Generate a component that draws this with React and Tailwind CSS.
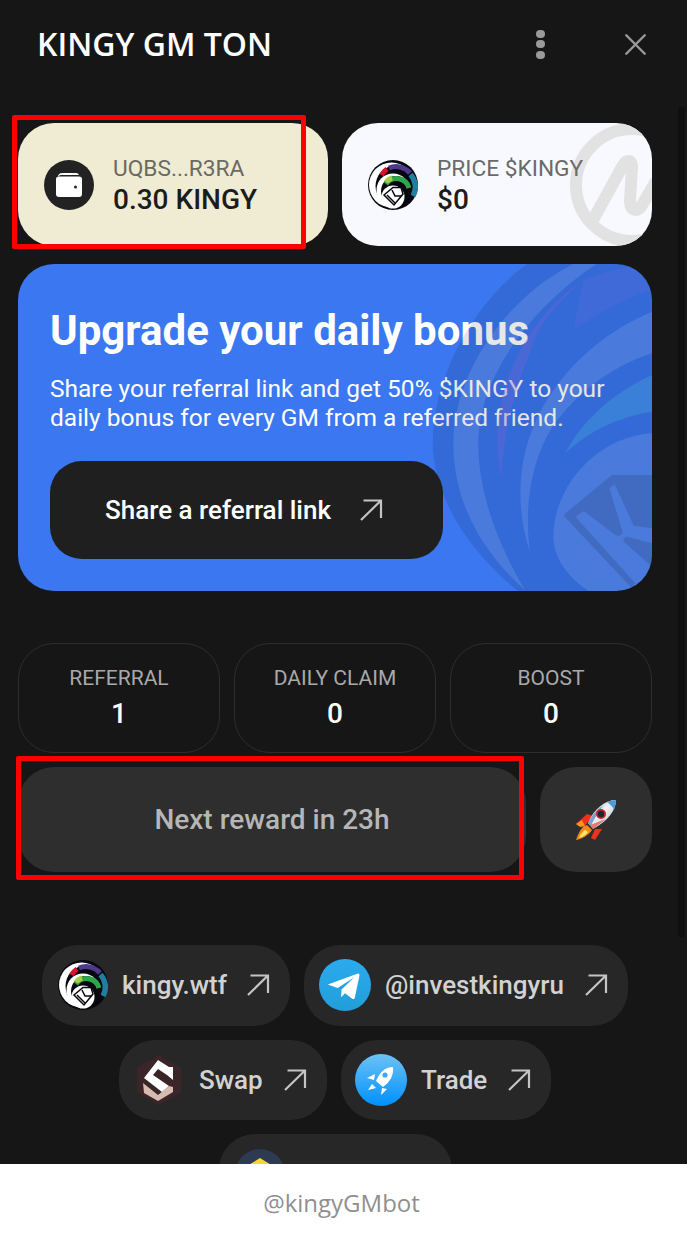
import React from 'react';
import { X } from 'lucide-react';

const roboto = 'font-["Roboto",sans-serif]';

const Arrow = () => (
  <svg width="24" height="24" viewBox="0 0 24 24" fill="none" stroke="#c4c4c4" strokeWidth="2.2" className="shrink-0">
    <path d="M2 22 L22 2.5 M4.5 2.5 H22 V20" />
  </svg>
);

const KingyLogo = () => (
  <svg width="50" height="50" viewBox="0 0 50 50" className="shrink-0">
    <circle cx="25" cy="25" r="25" fill="#07070f" />
    <circle cx="23.5" cy="25" r="22.5" fill="#fff" />
    <circle cx="28" cy="26" r="20.5" fill="#07070f" />
    <path d="M21 8 A18.5 18.5 0 0 1 42 13" fill="none" stroke="#4d3a8c" strokeWidth="5" />
    <path d="M13.5 15 A18.5 18.5 0 0 1 19 9" fill="none" stroke="#d8112c" strokeWidth="5" />
    <path d="M42.5 14.5 A18.5 18.5 0 0 1 45 36" fill="none" stroke="#1f7f9e" strokeWidth="5.5" />
    <circle cx="25" cy="30" r="16.5" fill="#fff" />
    <circle cx="28" cy="31" r="15" fill="#07070f" />
    <path d="M18 24 A13 13 0 0 1 41 28" fill="none" stroke="#2ba84a" strokeWidth="5" />
    <path d="M18 22 A13 13 0 0 1 24 18" fill="none" stroke="#a6cf45" strokeWidth="5" />
    <circle cx="25" cy="37" r="11.5" fill="#fff" />
    <path d="M16 35 L25 27.5 H33 L35 34 L26 45 Z" fill="#fff" stroke="#07070f" strokeWidth="1.5" />
    <path d="M19 35 L27 43 M24 30 L27 36 L33 36" fill="none" stroke="#07070f" strokeWidth="1.5" />
  </svg>
);

const TelegramLogo = () => (
  <svg width="52" height="52" viewBox="0 0 53 53" className="shrink-0">
    <defs>
      <linearGradient id="tg" x1="0" y1="0" x2="0" y2="1">
        <stop offset="0" stopColor="#2aabee" />
        <stop offset="1" stopColor="#229ed9" />
      </linearGradient>
    </defs>
    <circle cx="26.5" cy="26.5" r="26.5" fill="url(#tg)" />
    <path d="M9 26 L39 15 C40.5 14.5 41.6 15.3 41.2 17 L36.5 39.5 C36.1 41 35 41.3 33.8 40.5 L26.5 35 L22.5 39 L23 31 L36 18.5 L19 29.5Z" fill="#fff" />
  </svg>
);

const SwapLogo = () => (
  <svg width="46" height="50" viewBox="0 0 46 50" className="shrink-0">
    <path d="M23 0 L45 12.5 V37.5 L23 50 L1 37.5 V12.5Z" fill="#3a2529" />
    <path d="M22 5 L33 12 L37 12 V25 L31 20 L22 14 L17 20 L33 31 L26 37 L8 23Z" fill="#fff" />
    <path d="M7 28 L22 40 L33 31 L37 32 V37 L22 46 L8 38Z" fill="#d6bcae" />
  </svg>
);

const TradeLogo = () => (
  <svg width="52" height="52" viewBox="0 0 52 52" className="shrink-0">
    <defs>
      <linearGradient id="trade" x1="0" y1="0" x2="0" y2="1">
        <stop offset="0" stopColor="#6cc2f5" />
        <stop offset="1" stopColor="#0090ff" />
      </linearGradient>
    </defs>
    <circle cx="26" cy="26" r="26" fill="url(#trade)" />
    <path d="M38 13 C39 21 35 28 28 33 L21 27 C25 18 30 13 38 13Z" fill="#fff" />
    <circle cx="30" cy="21" r="2.6" fill="#3ba8f8" />
    <path d="M20 20 L12 24 L19 26 Z M27 34 L26 41 L32 35 Z M17 30 L13 36 L21 34Z" fill="#fff" />
  </svg>
);

const WalletIcon = () => (
  <svg width="28" height="26" viewBox="0 0 28 26">
    <path d="M3 5 C3 2 5 1 7 1 H21 C23 1 23.5 2 24 3 H6 C4.5 3 3.5 4 3 5Z" fill="#fff" />
    <path d="M1 7 C1 5.5 2 4.5 4 4.5 H24 C26 4.5 27 5.5 27 7 V22 C27 24 26 25 24 25 H4 C2 25 1 24 1 22Z" fill="#fff" />
    <circle cx="20.5" cy="15" r="1.5" fill="#222" />
  </svg>
);

const RocketIcon = () => (
  <svg width="42" height="42" viewBox="0 0 42 42">
    <defs>
      <linearGradient id="hull" x1="0" y1="0" x2="1" y2="1">
        <stop offset="0" stopColor="#8a8f94" />
        <stop offset="0.45" stopColor="#f2f2f2" />
        <stop offset="1" stopColor="#9fb4c4" />
      </linearGradient>
    </defs>
    <path d="M1 25 L12 15 L18 17 L9 28Z" fill="#f0301c" />
    <path d="M27 30 L20 41 L16 39 L20 30Z" fill="#f0301c" />
    <path d="M1 25 L7 21 L10 27 L5 28Z" fill="#f7941d" />
    <path d="M12 26 C6 28 3 35 1 41 C7 40 14 36 17 31Z" fill="#f28a1a" />
    <path d="M10 31 C7 33 5 36 4 39 C8 38 11 36 13 33Z" fill="#ffe566" />
    <path d="M41 1 C31 1 19 9 13 24 L18 30 C33 22 41 11 41 1Z" fill="url(#hull)" />
    <path d="M41 1 C38 1 35 2 32 3 C35 5 38 8 39 11 C40 8 41 4 41 1Z" fill="#4b9bd8" />
    <path d="M13 24 C18 14 24 9 28 7 C24 12 19 20 16 27Z" fill="#4a84c0" fillOpacity="0.7" />
    <path d="M18 30 L31 20 L15 26Z" fill="#e5331f" fillOpacity="0.6" />
    <circle cx="26" cy="15" r="5" fill="#d21f2b" />
    <circle cx="26" cy="15" r="3.2" fill="#1c2530" />
  </svg>
);

const BannerArt = () => (
  <svg viewBox="0 0 1041 1020" className="absolute left-[322px] top-[-4px] w-[347px] h-[340px] pointer-events-none">
    <path d="M560 12 H1041 V1020 H570 C400 900 280 720 278 550 C278 350 400 130 560 12Z" fill="#000" fillOpacity="0.1" />
    <path d="M700 12 H770 C590 130 415 340 415 550 C415 720 490 880 555 990 C430 880 340 730 340 550 C340 340 500 110 700 12Z" fill="#fff" fillOpacity="0.11" />
    <path d="M730 60 C650 130 600 190 580 250 C520 400 490 520 485 655 C460 560 470 440 510 340 C560 210 640 120 730 60Z" fill="#7a5fd0" fillOpacity="0.3" />
    <path d="M730 60 C800 30 860 20 936 12 V90 C840 120 760 170 700 210Z" fill="#6f6fd8" fillOpacity="0.2" />
    <path d="M570 875 C530 760 530 620 580 500 C650 330 800 210 936 155 V280 C810 320 690 410 620 530 C565 640 555 760 570 875Z" fill="#fff" fillOpacity="0.11" />
    <path d="M675 580 C740 460 840 390 936 345 V455 C840 470 750 510 675 580Z" fill="#3f8fd8" fillOpacity="0.55" />
    <path d="M936 520 C770 530 640 680 640 830 C640 890 680 950 746 993 H936Z" fill="#fff" fillOpacity="0.11" />
    <path d="M816 645 H936 V805 L881 797 L824 673 L808 685 L848 815 C849 825 835 830 826 825 L731 753 L706 770 L886 970 L876 985 L674 770 C671 765 673 762 678 758Z" fill="#000" fillOpacity="0.12" />
    <path d="M936 850 L861 830 C851 830 848 840 853 847 L936 920Z" fill="#000" fillOpacity="0.12" />
  </svg>
);

const Chip = ({ icon, label, width, pad, gap }) => (
  <div className={`${width} ${pad} h-[80.5px] rounded-[36px] bg-[#272727] flex items-center pr-5 shrink-0`}>
    {icon}
    {label && <span className={`${gap} text-[26px] font-medium text-[#d2d2d2] leading-none`}>{label}</span>}
    {label && <span className="ml-auto"><Arrow /></span>}
  </div>
);

const Stat = ({ label, value }) => (
  <div className="flex-1 h-[110px] rounded-[36px] border border-[#2d2d2d] flex flex-col items-center pt-[19px]">
    <span className="text-[21px] leading-[30px] text-[#a9a9a9]">{label}</span>
    <span className="mt-[1px] text-[28px] leading-[40px] font-medium text-white">{value}</span>
  </div>
);

export default function App() {
  return (
    <div className="relative w-[687px] h-[1240px] overflow-hidden bg-[#161616] flex flex-col">
      {/* header */}
      <div className="h-[88px] shrink-0 flex items-center pl-[37px] pr-[33px]">
        <span className='font-["Open_Sans",sans-serif] font-semibold text-[32px] text-white'>KINGY GM TON</span>
        <div className="ml-auto flex flex-col gap-[2.5px] mr-[72px]">
          <span className="w-[9px] h-2 rounded-full bg-[#9a9a9a]" />
          <span className="w-[9px] h-2 rounded-full bg-[#9a9a9a]" />
          <span className="w-[9px] h-2 rounded-full bg-[#9a9a9a]" />
        </div>
        <X size={37} strokeWidth={1.6} color="#9a9a9a" />
      </div>

      {/* scroll area */}
      <div className={`flex-1 overflow-hidden pt-[35px] pl-[18px] pr-[35px] ${roboto}`}>
        <div className="flex gap-[14px]">
          <div className="flex-1 h-[123px] rounded-[36px] bg-[#f0ecd3] flex items-center pl-[26px] gap-[19px]">
            <div className="w-[50px] h-[50px] rounded-full bg-[#222222] flex items-center justify-center">
              <WalletIcon />
            </div>
            <div className="flex flex-col pb-[1px]">
              <span className="text-[22.7px] leading-[30px] text-[#6a6a62]">UQBS...R3RA</span>
              <span className="text-[28px] leading-[31px] font-medium text-[#1c1c1c]">0.30 KINGY</span>
            </div>
          </div>
          <div className="relative flex-1 h-[123px] rounded-[36px] bg-[#f8f9fe] overflow-hidden flex items-center pl-[26px] gap-[19px]">
            <svg width="90" height="123" viewBox="0 0 90 123" fill="none" className="absolute left-[220px] top-0">
              <circle cx="70" cy="62" r="56" stroke="#e2e2e2" strokeWidth="12" />
              <path d="M31 97 L60 44 C64 36 70 36 70 44 L68 78 C68 88 76 90 80 82 L94 58" stroke="#e2e2e2" strokeWidth="12" strokeLinejoin="round" />
            </svg>
            <KingyLogo />
            <div className="relative flex flex-col pb-[1px]">
              <span className="text-[22.7px] leading-[30px] text-[#6a6a6a]">PRICE $KINGY</span>
              <span className="text-[28px] leading-[31px] font-medium text-[#1c1c1c]">$0</span>
            </div>
          </div>
        </div>

        {/* banner */}
        <div className="relative mt-[18px] h-[327px] rounded-[36px] bg-[#3a77f0] overflow-hidden pl-8 pt-[42px]">
          <h1 className="text-[42px] leading-[50px] font-bold text-white">Upgrade your daily bonus</h1>
          <p className="mt-[18px] text-[24.5px] leading-[29px] text-white whitespace-nowrap">
            Share your referral link and get 50% $KINGY to your<br />daily bonus for every GM from a referred friend.
          </p>
          <div className="relative z-10 mt-[29px] w-[393px] h-[98px] rounded-[32px] bg-[#1f1f1f] flex items-center pl-[55px]">
            <span className="text-[26px] font-medium text-white">Share a referral link</span>
            <span className="ml-[28px]"><Arrow /></span>
          </div>
          <BannerArt />
        </div>

        {/* stats */}
        <div className="mt-[52px] flex gap-[14px]">
          <Stat label="REFERRAL" value="1" />
          <Stat label="DAILY CLAIM" value="0" />
          <Stat label="BOOST" value="0" />
        </div>

        <div className="mt-[14px] flex gap-[14px]">
          <div className="flex-1 h-[105px] rounded-[36px] bg-[#2e2e2e] flex items-center justify-center">
            <span className="text-[28px] font-medium text-[#b6b6b6]">Next reward in 23h</span>
          </div>
          <div className="w-[112px] h-[105px] rounded-[36px] bg-[#2e2e2e] flex items-center justify-center">
            <RocketIcon />
          </div>
        </div>

        {/* links */}
        <div className="mt-[73px] flex flex-wrap justify-center gap-[14px] w-[634px]">
          <Chip width="w-[248px]" pad="pl-4" gap="ml-[14px]" icon={<KingyLogo />} label="kingy.wtf" />
          <Chip width="w-[324px]" pad="pl-[15px]" gap="ml-[14px]" icon={<TelegramLogo />} label="@investkingyru" />
          <Chip width="w-[208px]" pad="pl-[17px]" gap="ml-[17px]" icon={<SwapLogo />} label="Swap" />
          <Chip width="w-[210px]" pad="pl-[14px]" gap="ml-[14px]" icon={<TradeLogo />} label="Trade" />
          <Chip
            width="w-[233px]"
            pad="pl-4"
            icon={
              <svg width="50" height="50" viewBox="0 0 50 50" className="shrink-0">
                <circle cx="25" cy="25" r="25" fill="#2c3a52" />
                <path d="M25 9 L38 17 V33 L25 41 L12 33 V17Z" fill="#f8d33a" />
              </svg>
            }
          />
        </div>
      </div>

      {/* footer */}
      <div className='h-[76px] shrink-0 bg-white flex items-center justify-center pr-1 pt-[2px] font-["Open_Sans",sans-serif] text-[24px] text-[#8f8f8f]'>
        @kingyGMbot
      </div>

      {/* scrollbar thumb */}
      <div className="absolute left-[678px] top-[107px] w-[7px] h-[830px] rounded-full bg-[#0f0f0f]" />

      {/* red annotation boxes */}
      <div className="absolute left-[12px] top-[115px] w-[294px] h-[134px] border-[5px] border-[#ff0000] rounded-[2px]" />
      <div className="absolute left-[16px] top-[756px] w-[508px] h-[124px] border-[5px] border-[#ff0000] rounded-[2px]" />
    </div>
  );
}
